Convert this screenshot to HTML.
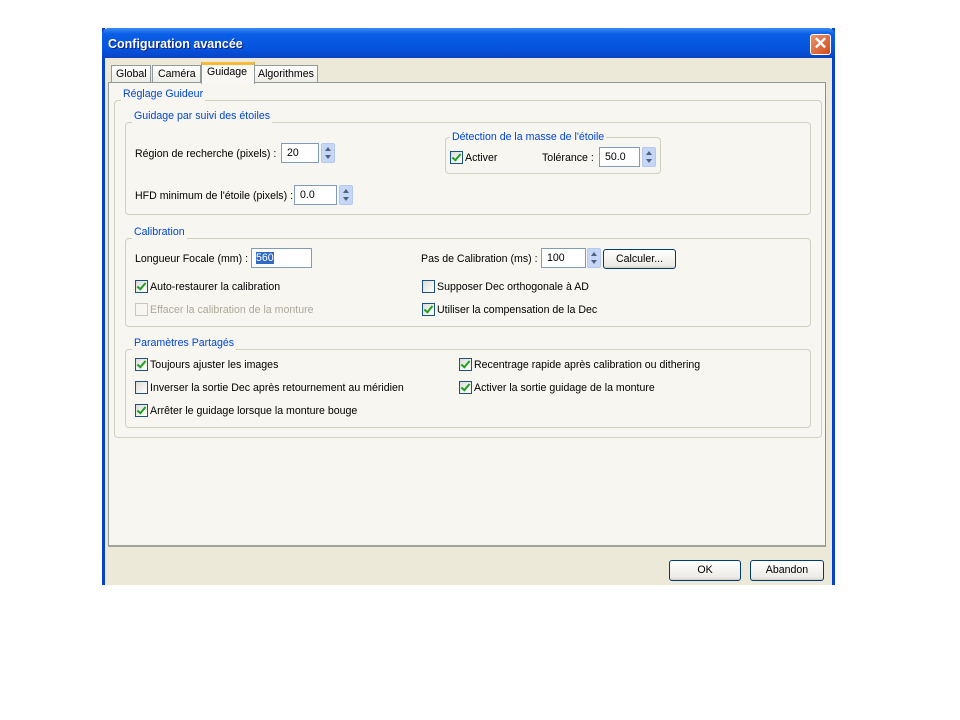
<!DOCTYPE html>
<html><head><meta charset="utf-8"><style>
*{margin:0;padding:0;box-sizing:border-box}
body{width:960px;height:720px;background:#fff;position:relative;overflow:hidden;font-family:"Liberation Sans",sans-serif;font-size:10.6px;color:#000}
.a{position:absolute}
.t{position:absolute;white-space:nowrap;line-height:13px}
.grp{position:absolute;border:1px solid #d0d0bf;border-radius:4px}
.lbl{position:absolute;background:#f7f6f1;color:#0046d5;padding:0 2px;line-height:13px;white-space:nowrap}
.inp{position:absolute;background:#fff;border:1px solid #7f9db9;height:20px;padding:3px 0 0 5px;line-height:13px}
.sp{position:absolute;width:14px;height:20px;background:#c6d6f7;border:1px solid #b5c8ef;border-radius:2px}
.sp:before{content:"";position:absolute;left:3px;top:3px;border:3px solid transparent;border-bottom:4px solid #4d6185;border-top:0}
.sp:after{content:"";position:absolute;left:3px;bottom:3px;border:3px solid transparent;border-top:4px solid #4d6185;border-bottom:0}
.cb{position:absolute;width:13px;height:13px;border:1px solid #1c5180;background:linear-gradient(135deg,#dcdcd7,#fff)}
.cb.on:after{content:"";position:absolute;left:3px;top:0px;width:3px;height:7px;border:solid #21a121;border-width:0 2px 2px 0;transform:rotate(40deg)}
.cb.dis{border-color:#cac8bb;background:#f7f6f1}
.btn{position:absolute;border:1px solid #003c74;border-radius:3px;background:linear-gradient(#fff,#ecebe6 85%,#d6d0c5);text-align:center;line-height:19px}
</style></head><body>
<div class="a" style="left:102px;top:28px;width:733px;height:557px;background:#ece9d8;border-left:3px solid #0842c8;border-right:3px solid #0842c8"></div>
<div class="a" style="left:102px;top:28px;width:733px;height:30px;border-radius:7px 7px 0 0;background:linear-gradient(#3d8cf5,#0a5ee6 20%,#0553de 70%,#0843c5)"></div>
<div class="t" style="left:108px;top:37px;color:#fff;font-weight:bold;font-size:12.5px;line-height:15px;text-shadow:1px 1px #0a1e7a">Configuration avancée</div>
<div class="a" style="left:810px;top:34px;width:21px;height:21px;border:1px solid #fff;border-radius:3px;background:linear-gradient(135deg,#e8946e,#d44a1c);color:#fff;font-size:17px;line-height:18px;text-align:center;font-weight:bold">✕</div>
<div class="a" style="left:111px;top:65px;width:40px;height:18px;border:1px solid #919b9c;border-bottom:0;background:linear-gradient(#fff,#ecebe5)"></div>
<div class="t" style="left:116px;top:68px">Global</div>
<div class="a" style="left:152px;top:65px;width:49px;height:18px;border:1px solid #919b9c;border-bottom:0;background:linear-gradient(#fff,#ecebe5)"></div>
<div class="t" style="left:158px;top:68px">Caméra</div>
<div class="a" style="left:254px;top:65px;width:64px;height:18px;border:1px solid #919b9c;border-bottom:0;background:linear-gradient(#fff,#ecebe5)"></div>
<div class="t" style="left:258px;top:68px">Algorithmes</div>
<div class="a" style="left:108px;top:82px;width:718px;height:465px;background:#f7f6f1;border:1px solid #919b9c;border-right-color:#8a8f90;border-bottom:2px solid #a0a49a"></div>
<div class="a" style="left:201px;top:62px;width:54px;height:22px;border:1px solid #919b9c;border-bottom:0;border-top:3px solid #f5b93c;background:#f9f8f4"></div>
<div class="t" style="left:207px;top:66px">Guidage</div>
<div class="grp" style="left:114px;top:100px;width:708px;height:338px"></div>
<div class="lbl" style="left:121px;top:88px">Réglage Guideur</div>
<div class="grp" style="left:125px;top:122px;width:686px;height:93px"></div>
<div class="lbl" style="left:132px;top:110px">Guidage par suivi des étoiles</div>
<div class="t" style="left:135px;top:148px">Région de recherche (pixels) :</div>
<div class="inp" style="left:281px;top:143px;width:38px">20</div>
<div class="sp" style="left:321px;top:143px"></div>
<div class="t" style="left:135px;top:190px">HFD minimum de l'étoile (pixels) :</div>
<div class="inp" style="left:294px;top:185px;width:43px">0.0</div>
<div class="sp" style="left:339px;top:185px"></div>
<div class="grp" style="left:445px;top:137px;width:216px;height:37px"></div>
<div class="lbl" style="left:450px;top:131px">Détection de la masse de l'étoile</div>
<div class="cb on" style="left:450px;top:151px"></div>
<div class="t" style="left:465px;top:152px">Activer</div>
<div class="t" style="left:542px;top:152px">Tolérance :</div>
<div class="inp" style="left:599px;top:147px;width:41px">50.0</div>
<div class="sp" style="left:642px;top:147px"></div>
<div class="grp" style="left:125px;top:238px;width:686px;height:89px"></div>
<div class="lbl" style="left:132px;top:226px">Calibration</div>
<div class="t" style="left:135px;top:253px">Longueur Focale (mm) :</div>
<div class="inp" style="left:251px;top:248px;width:61px;padding-left:4px"><span style="background:#316ac5;color:#fff">560</span></div>
<div class="t" style="left:421px;top:253px">Pas de Calibration (ms) :</div>
<div class="inp" style="left:541px;top:248px;width:45px">100</div>
<div class="sp" style="left:587px;top:248px"></div>
<div class="btn" style="left:603px;top:249px;width:73px;height:20px">Calculer...</div>
<div class="cb on" style="left:135px;top:280px"></div>
<div class="t" style="left:150px;top:281px">Auto-restaurer la calibration</div>
<div class="cb dis" style="left:135px;top:303px"></div>
<div class="t" style="left:150px;top:304px;color:#aca899">Effacer la calibration de la monture</div>
<div class="cb" style="left:422px;top:280px"></div>
<div class="t" style="left:437px;top:281px">Supposer Dec orthogonale à AD</div>
<div class="cb on" style="left:422px;top:303px"></div>
<div class="t" style="left:437px;top:304px">Utiliser la compensation de la Dec</div>
<div class="grp" style="left:125px;top:349px;width:686px;height:79px"></div>
<div class="lbl" style="left:132px;top:337px">Paramètres Partagés</div>
<div class="cb on" style="left:135px;top:358px"></div>
<div class="t" style="left:150px;top:359px">Toujours ajuster les images</div>
<div class="cb" style="left:135px;top:381px"></div>
<div class="t" style="left:150px;top:382px">Inverser la sortie Dec après retournement au méridien</div>
<div class="cb on" style="left:135px;top:404px"></div>
<div class="t" style="left:150px;top:405px">Arrêter le guidage lorsque la monture bouge</div>
<div class="cb on" style="left:459px;top:358px"></div>
<div class="t" style="left:474px;top:359px">Recentrage rapide après calibration ou dithering</div>
<div class="cb on" style="left:459px;top:381px"></div>
<div class="t" style="left:474px;top:382px">Activer la sortie guidage de la monture</div>
<div class="btn" style="left:669px;top:560px;width:72px;height:21px">OK</div>
<div class="btn" style="left:750px;top:560px;width:74px;height:21px">Abandon</div>
</body></html>
